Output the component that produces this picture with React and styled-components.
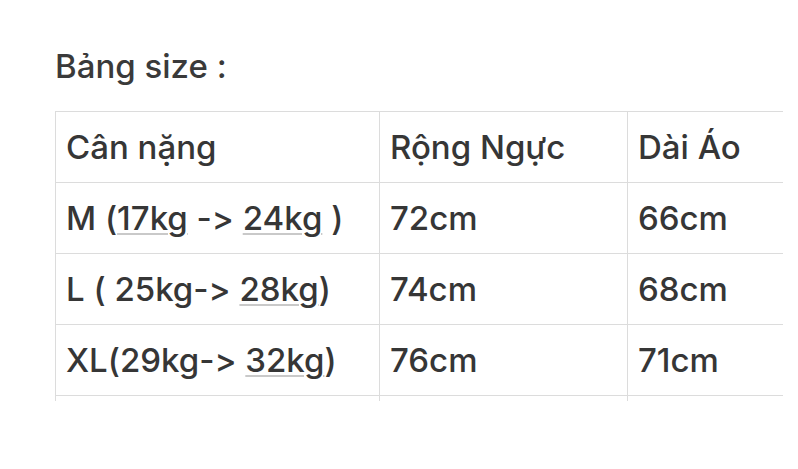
import React from "react";
import styled, { createGlobalStyle } from "styled-components";

const GlobalStyle = createGlobalStyle`
  html, body {
    margin: 0;
    padding: 0;
    background: #ffffff;
  }
  body {
    font-family: Inter, "Noto Sans", "Liberation Sans", sans-serif;
    font-variant-ligatures: none;
    font-feature-settings: "calt" 0, "liga" 0;
    color: #363636;
  }
`;

const Page = styled.div`
  width: 798px;
  height: 469px;
  padding: 46px 0 0 55px;
  box-sizing: border-box;
  overflow: hidden;
`;

const Title = styled.h2`
  margin: 0 0 25px 0;
  font-size: 33px;
  font-weight: 500;
  line-height: 40px;
  color: #3a3a3a;
`;

const TableClip = styled.div`
  width: 728px;
  height: 290px;
  overflow: hidden;
`;

const SizeTable = styled.table`
  border-collapse: collapse;
  table-layout: fixed;
  width: 820px;
`;

const Col = styled.col`
  width: ${(p) => p.$w}px;
`;

const Cell = styled.td`
  border: 1px solid #dcdcdc;
  height: 71px;
  padding: 0 10px;
  box-sizing: border-box;
  font-size: 33px;
  font-weight: 500;
  line-height: 40px;
  color: #363636;
  vertical-align: middle;
  white-space: nowrap;
`;

const Weight = styled.span`
  text-decoration: underline;
  text-decoration-color: #c9c9c9;
  text-decoration-thickness: 2px;
  text-underline-offset: 3px;
  text-decoration-skip-ink: auto;
`;

const rows = [
  [<>M (<Weight>17kg</Weight> -&gt; <Weight>24kg</Weight> )</>, "72cm", "66cm"],
  [<>L ( 25kg-&gt; <Weight>28kg</Weight>)</>, "74cm", "68cm"],
  [<>XL(29kg-&gt; <Weight>32kg</Weight>)</>, "76cm", "71cm"],
  ["", "", ""],
];

export default function App() {
  return (
    <>
      <GlobalStyle />
      <Page>
        <Title>Bảng size :</Title>
        <TableClip>
          <SizeTable>
            <colgroup>
              <Col $w={324} />
              <Col $w={248} />
              <Col $w={248} />
            </colgroup>
            <tbody>
              <tr>
                <Cell>Cân nặng</Cell>
                <Cell>Rộng Ngực</Cell>
                <Cell>Dài Áo</Cell>
              </tr>
              {rows.map((r, i) => (
                <tr key={i}>
                  {r.map((c, j) => (
                    <Cell key={j}>{c}</Cell>
                  ))}
                </tr>
              ))}
            </tbody>
          </SizeTable>
        </TableClip>
      </Page>
    </>
  );
}
